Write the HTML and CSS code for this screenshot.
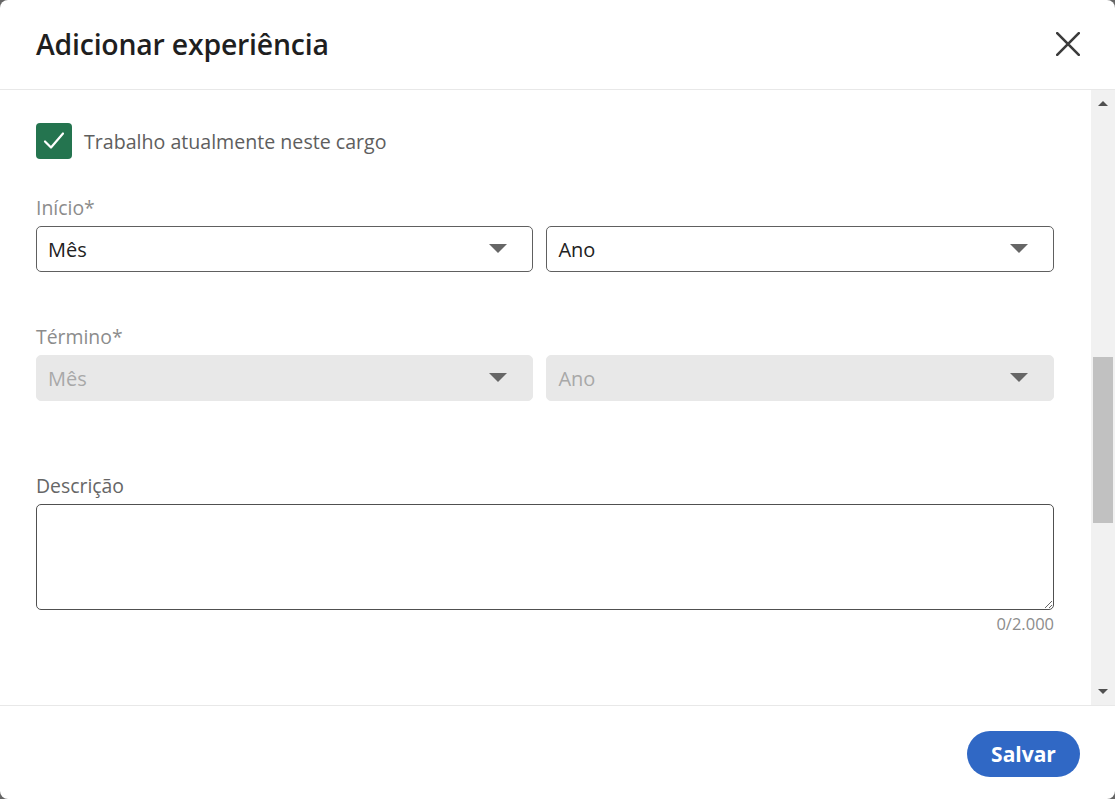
FILE: index.html
```html
<!DOCTYPE html>
<html lang="pt-BR">
<head>
<meta charset="utf-8">
<title>Adicionar experiência</title>
<link rel="stylesheet" href="styles.css">
</head>
<body>
<div class="modal">
  <header class="modal-header">
    <h2 class="modal-title">Adicionar experiência</h2>
    <button class="close-btn" aria-label="Fechar">
      <svg width="24" height="24" viewBox="0 0 24 24"><path d="M1.2 1.2 L22.8 22.8 M22.8 1.2 L1.2 22.8" stroke="#3c3c3c" stroke-width="2.6" stroke-linecap="round" fill="none"/></svg>
    </button>
  </header>
  <div class="modal-body">
    <div class="content">
      <label class="check-row">
        <span class="checkbox">
          <svg width="24" height="24" viewBox="0 0 24 24"><path d="M3 12.5 L9 18.5 L21 4.5" stroke="#fff" stroke-width="2.2" fill="none" stroke-linecap="round" stroke-linejoin="round"/></svg>
        </span>
        <span class="check-label">Trabalho atualmente neste cargo</span>
      </label>

      <div class="field field-start">
        <div class="label muted">Início*</div>
        <div class="select-row">
          <div class="select"><span>Mês</span><i class="caret"></i></div>
          <div class="select"><span>Ano</span><i class="caret"></i></div>
        </div>
      </div>

      <div class="field field-end">
        <div class="label muted">Término*</div>
        <div class="select-row">
          <div class="select disabled"><span>Mês</span><i class="caret"></i></div>
          <div class="select disabled"><span>Ano</span><i class="caret"></i></div>
        </div>
      </div>

      <div class="field field-desc">
        <div class="label">Descrição</div>
        <textarea class="textarea"></textarea>
        <div class="counter">0/2.000</div>
      </div>
    </div>
    <div class="scrollbar">
      <div class="sb-arrow up"></div>
      <div class="sb-track"><div class="sb-thumb"></div></div>
      <div class="sb-arrow down"></div>
    </div>
  </div>
  <footer class="modal-footer">
    <button class="save-btn">Salvar</button>
  </footer>
</div>
</body>
</html>
```

FILE: styles.css
```css
* { box-sizing: border-box; }
html, body {
  margin: 0;
  height: 100%;
  background: #666666;
}
body {
  font-family: "Open Sans", "Noto Sans", "Liberation Sans", sans-serif;
  overflow: hidden;
}
.modal {
  width: 1115px;
  height: 799px;
  background: #fff;
  border-radius: 8px;
  display: flex;
  flex-direction: column;
  overflow: hidden;
}
.modal-header {
  height: 90px;
  flex: none;
  border-bottom: 1px solid #e8e8e8;
  display: flex;
  align-items: center;
  justify-content: space-between;
  padding: 0 35px 0 36px;
}
.modal-title {
  margin: 0;
  font-size: 28.4px;
  font-weight: 600;
  color: #1f1f1f;
  letter-spacing: -0.2px;
  padding-bottom: 2px;
}
.close-btn {
  background: none;
  border: 0;
  padding: 0;
  width: 24px;
  height: 24px;
  display: flex;
  margin-bottom: 2px;
}
.modal-body {
  height: 616px;
  flex: none;
  display: flex;
  border-bottom: 1px solid #e8e8e8;
}
.content {
  flex: 1;
  padding: 33px 37px 0 36px;
}
.check-row {
  display: flex;
  align-items: center;
  gap: 12px;
  height: 36px;
}
.checkbox {
  width: 36px;
  height: 36px;
  border-radius: 4px;
  background: #24744f;
  display: flex;
  align-items: center;
  justify-content: center;
}
.check-label {
  font-size: 19.6px;
  color: #5e5e5e;
}
.label {
  font-size: 19.4px;
  line-height: 24px;
  color: #666;
  margin-bottom: 6px;
}
.label.muted { color: #8c8c8c; }
.field-start { margin-top: 37px; }
.field-end { margin-top: 53px; }
.field-desc { margin-top: 73px; }
.select-row {
  display: flex;
  gap: 13px;
}
.select {
  flex: 497;
  height: 46px;
  border: 1px solid #606060;
  border-radius: 5px;
  display: flex;
  align-items: center;
  justify-content: space-between;
  padding: 0 25px 0 11px;
  font-size: 20px;
  color: #222;
}
.select + .select { flex: 508; }
.select.disabled {
  border-color: #e8e8e8;
  background: #e8e8e8;
  color: #a8a8a8;
}
.caret {
  width: 0;
  height: 0;
  border-left: 9px solid transparent;
  border-right: 9px solid transparent;
  border-top: 9px solid #666;
  margin-top: -2px;
}
.textarea {
  display: block;
  width: 100%;
  height: 106px;
  border: 1px solid #505050;
  border-radius: 5px;
  resize: vertical;
  font-family: inherit;
  font-size: 18px;
  outline: none;
}
.counter {
  text-align: right;
  font-size: 16.5px;
  line-height: 20px;
  color: #8c8c8c;
  margin-top: 4px;
}
.scrollbar {
  width: 24px;
  flex: none;
  background: #f1f1f1;
  display: flex;
  flex-direction: column;
}
.sb-arrow {
  height: 24px;
  display: flex;
  align-items: center;
  justify-content: center;
}
.sb-arrow::before {
  content: "";
  width: 0;
  height: 0;
  border-left: 5px solid transparent;
  border-right: 5px solid transparent;
}
.sb-arrow.up::before { border-bottom: 5px solid #505050; margin-top: 2px; }
.sb-arrow.down::before { border-top: 5px solid #505050; margin-bottom: 3px; }
.sb-track { flex: 1; padding: 243px 2px 0; }
.sb-thumb {
  height: 166px;
  background: #c1c1c1;
}
.modal-footer {
  flex: 1;
  display: flex;
  justify-content: flex-end;
  align-items: flex-start;
  padding: 25px 35px 0 0;
}
.save-btn {
  width: 113px;
  height: 46px;
  border: 0;
  border-radius: 23px;
  background: #3068c5;
  color: #fff;
  font-family: inherit;
  font-size: 21px;
  font-weight: 700;
}
```
